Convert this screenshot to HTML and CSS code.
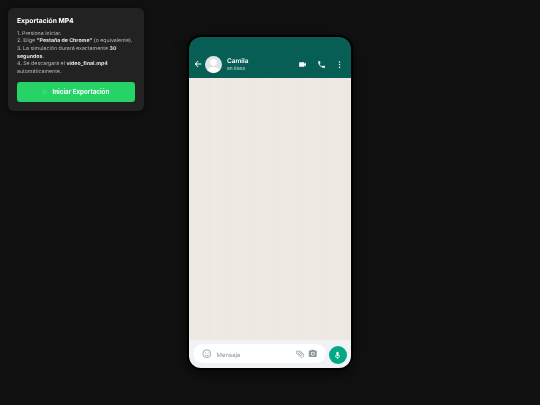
FILE: index.html
```html
<!DOCTYPE html>
<html>
<head>
    <title>Exportación MP4</title>
    <link rel="stylesheet" href="styles.css">
</head>
<body>
    <div class="panel">
        <h2>Exportación MP4</h2>
        <ol class="steps">
            <li>1. Presiona Iniciar.</li>
            <li>2. Elige <strong>"Pestaña de Chrome"</strong> (o equivalente).</li>
            <li>3. La simulación durará exactamente <strong>30 segundos</strong>.</li>
            <li>4. Se descargará el <strong>video_final.mp4</strong> automáticamente.</li>
        </ol>
        <button class="btn"><span class="btn-icon">▷</span>Iniciar Exportación</button>
    </div>

    <div class="phone">
        <div class="topbar">
            <svg class="back" viewBox="0 0 24 24"><path d="M20 11H7.800l5.600-5.600L12 4l-8 8 8 8 1.400-1.400L7.800 13H20z"/></svg>
            <div class="avatar">
                <svg viewBox="0 0 24 24"><circle cx="12" cy="9" r="4.600"/><path d="M2.500 24c0-5.600 4.200-8.600 9.500-8.600s9.500 3 9.500 8.600z"/></svg>
            </div>
            <div class="contact">
                <div class="name">Camila</div>
                <div class="state">en línea</div>
            </div>
            <div class="actions">
                <svg viewBox="0 0 24 24"><path d="M17 10.500V7a1 1 0 0 0-1-1H4a1 1 0 0 0-1 1v10a1 1 0 0 0 1 1h12a1 1 0 0 0 1-1v-3.500l4 4v-11z"/></svg>
                <svg viewBox="0 0 24 24"><path d="M6.600 10.800a15 15 0 0 0 6.600 6.600l2.200-2.200a1 1 0 0 1 1-.2 11.400 11.400 0 0 0 3.600.6 1 1 0 0 1 1 1V20a1 1 0 0 1-1 1A17 17 0 0 1 3 4a1 1 0 0 1 1-1h3.500a1 1 0 0 1 1 1 11.400 11.400 0 0 0 .6 3.600 1 1 0 0 1-.3 1z"/></svg>
                <svg viewBox="0 0 24 24"><circle cx="12" cy="5" r="2"/><circle cx="12" cy="12" r="2"/><circle cx="12" cy="19" r="2"/></svg>
            </div>
        </div>
        <div class="chat"></div>
        <div class="composer">
            <div class="input">
                <svg class="emoji" viewBox="0 0 24 24"><circle cx="12" cy="12" r="10"/><circle cx="8.500" cy="10" r="1.400" class="dot"/><circle cx="15.500" cy="10" r="1.400" class="dot"/><path d="M7.500 14.500c1 2 2.600 3 4.500 3s3.500-1 4.500-3"/></svg>
                <span class="placeholder">Mensaje</span>
                <svg class="clip" viewBox="0 0 24 24"><path d="M16.500 6v11.500a4 4 0 0 1-8 0V5a2.500 2.500 0 0 1 5 0v10.500a1 1 0 0 1-2 0V6H10v9.500a2.500 2.500 0 0 0 5 0V5a4 4 0 0 0-8 0v12.500a5.500 5.500 0 0 0 11 0V6z" transform="rotate(-45 12 12)"/></svg>
                <svg class="camera" viewBox="0 0 24 24"><path d="M9 2 7.200 4H4a2 2 0 0 0-2 2v12a2 2 0 0 0 2 2h16a2 2 0 0 0 2-2V6a2 2 0 0 0-2-2h-3.200L15 2zm3 15a5 5 0 1 1 0-10 5 5 0 0 1 0 10zm0-2a3 3 0 1 0 0-6 3 3 0 0 0 0 6z" fill-rule="evenodd"/></svg>
            </div>
            <div class="mic">
                <svg viewBox="0 0 24 24"><path d="M12 14a3 3 0 0 0 3-3V5a3 3 0 0 0-6 0v6a3 3 0 0 0 3 3zm5.300-3a5.300 5.300 0 0 1-10.600 0H5c0 3.400 2.700 6.200 6 6.700V21h2v-3.300c3.300-.5 6-3.300 6-6.700z"/></svg>
            </div>
        </div>
    </div>
</body>
</html>
```

FILE: styles.css
```css
* {
    box-sizing: border-box;
}
body {
    margin: 0;
    height: 100vh;
    background: #111111;
    font-family: Inter, "Liberation Sans", sans-serif;
    text-rendering: geometricPrecision;
    display: flex;
    align-items: center;
    justify-content: center;
    overflow: hidden;
}
.panel {
    position: absolute;
    top: 8px;
    left: 8px;
    width: 136px;
    height: 103px;
    padding: 8px 9px;
    background: #222222;
    border-radius: 6px;
    box-shadow: 0 2px 8px rgba(0,0,0,0.5);
    color: #bbbbbb;
    filter: blur(0.2px);
}
.panel h2 {
    margin: 0 0 5.500px;
    font-size: 6.750px;
    line-height: 9px;
    font-weight: 700;
    color: #ffffff;
}
.steps {
    list-style: none;
    margin: 0 0 5px;
    padding: 0;
    font-size: 5.250px;
    line-height: 7.700px;
}
.steps strong {
    color: #e4e4e4;
}
.btn {
    display: flex;
    align-items: center;
    justify-content: center;
    width: 100%;
    height: 20.500px;
    border: none;
    border-radius: 3px;
    background: #25d366;
    color: #ffffff;
    font-family: inherit;
    font-size: 6.200px;
    font-weight: 700;
}
.btn-icon {
    font-size: 5px;
    margin-right: 5px;
    opacity: 0.25;
}
.phone {
    width: 166px;
    height: 335px;
    border: 2.500px solid #000000;
    border-radius: 14px;
    background: #000000;
    box-shadow: 0 4px 14px rgba(0,0,0,0.6);
    display: flex;
    flex-direction: column;
    overflow: hidden;
    filter: blur(0.2px);
}
.topbar {
    height: 40.500px;
    flex-shrink: 0;
    background: #075e54;
    display: flex;
    align-items: flex-end;
    padding: 0 7px 5px 3.500px;
    color: #ffffff;
}
.topbar svg {
    fill: #ffffff;
}
.back {
    width: 10px;
    height: 10px;
    margin: 0 2px 3.500px 0;
}
.avatar {
    width: 17px;
    height: 17px;
    border-radius: 50%;
    background: #dfe5e7;
    overflow: hidden;
    margin-right: 5.500px;
}
.avatar svg {
    display: block;
    width: 17px;
    height: 17px;
}
.contact {
    flex: 1;
}
.name {
    font-size: 6.500px;
    line-height: 9px;
    font-weight: 600;
}
.state {
    font-size: 4.900px;
    line-height: 7px;
    opacity: 0.75;
}
.actions {
    display: flex;
    align-items: center;
    gap: 9.500px;
    margin-bottom: 4px;
}
.actions svg {
    width: 9px;
    height: 9px;
}
.chat {
    flex: 1;
    background: repeating-linear-gradient(90deg, #eeeae3 0, #eeeae3 14px, #ede9e2 14px, #ede9e2 23px);
}
.composer {
    height: 28px;
    flex-shrink: 0;
    background: #f0f2f5;
    display: flex;
    align-items: flex-end;
    gap: 3px;
    padding: 0 4.500px 4px 3.500px;
}
.input {
    flex: 1;
    height: 19px;
    margin-bottom: 1px;
    background: #ffffff;
    border-radius: 10px;
    display: flex;
    align-items: center;
    padding: 0 8px 0 9px;
}
.input svg {
    fill: #8696a0;
}
.emoji {
    width: 9.500px;
    height: 9.500px;
    margin-right: 5.500px;
}
.input .emoji {
    fill: none;
    stroke: #8696a0;
    stroke-width: 2;
}
.input .emoji .dot {
    fill: #8696a0;
    stroke: none;
}
.placeholder {
    flex: 1;
    font-size: 6px;
    color: #8696a0;
    padding-top: 3.500px;
}
.clip {
    width: 10px;
    height: 10px;
    margin-right: 3.500px;
}
.camera {
    width: 9.500px;
    height: 9.500px;
}
.mic {
    width: 18px;
    height: 18px;
    border-radius: 50%;
    background: #00a884;
    display: flex;
    align-items: center;
    justify-content: center;
}
.mic svg {
    width: 9px;
    height: 9px;
    fill: #ffffff;
}
```
